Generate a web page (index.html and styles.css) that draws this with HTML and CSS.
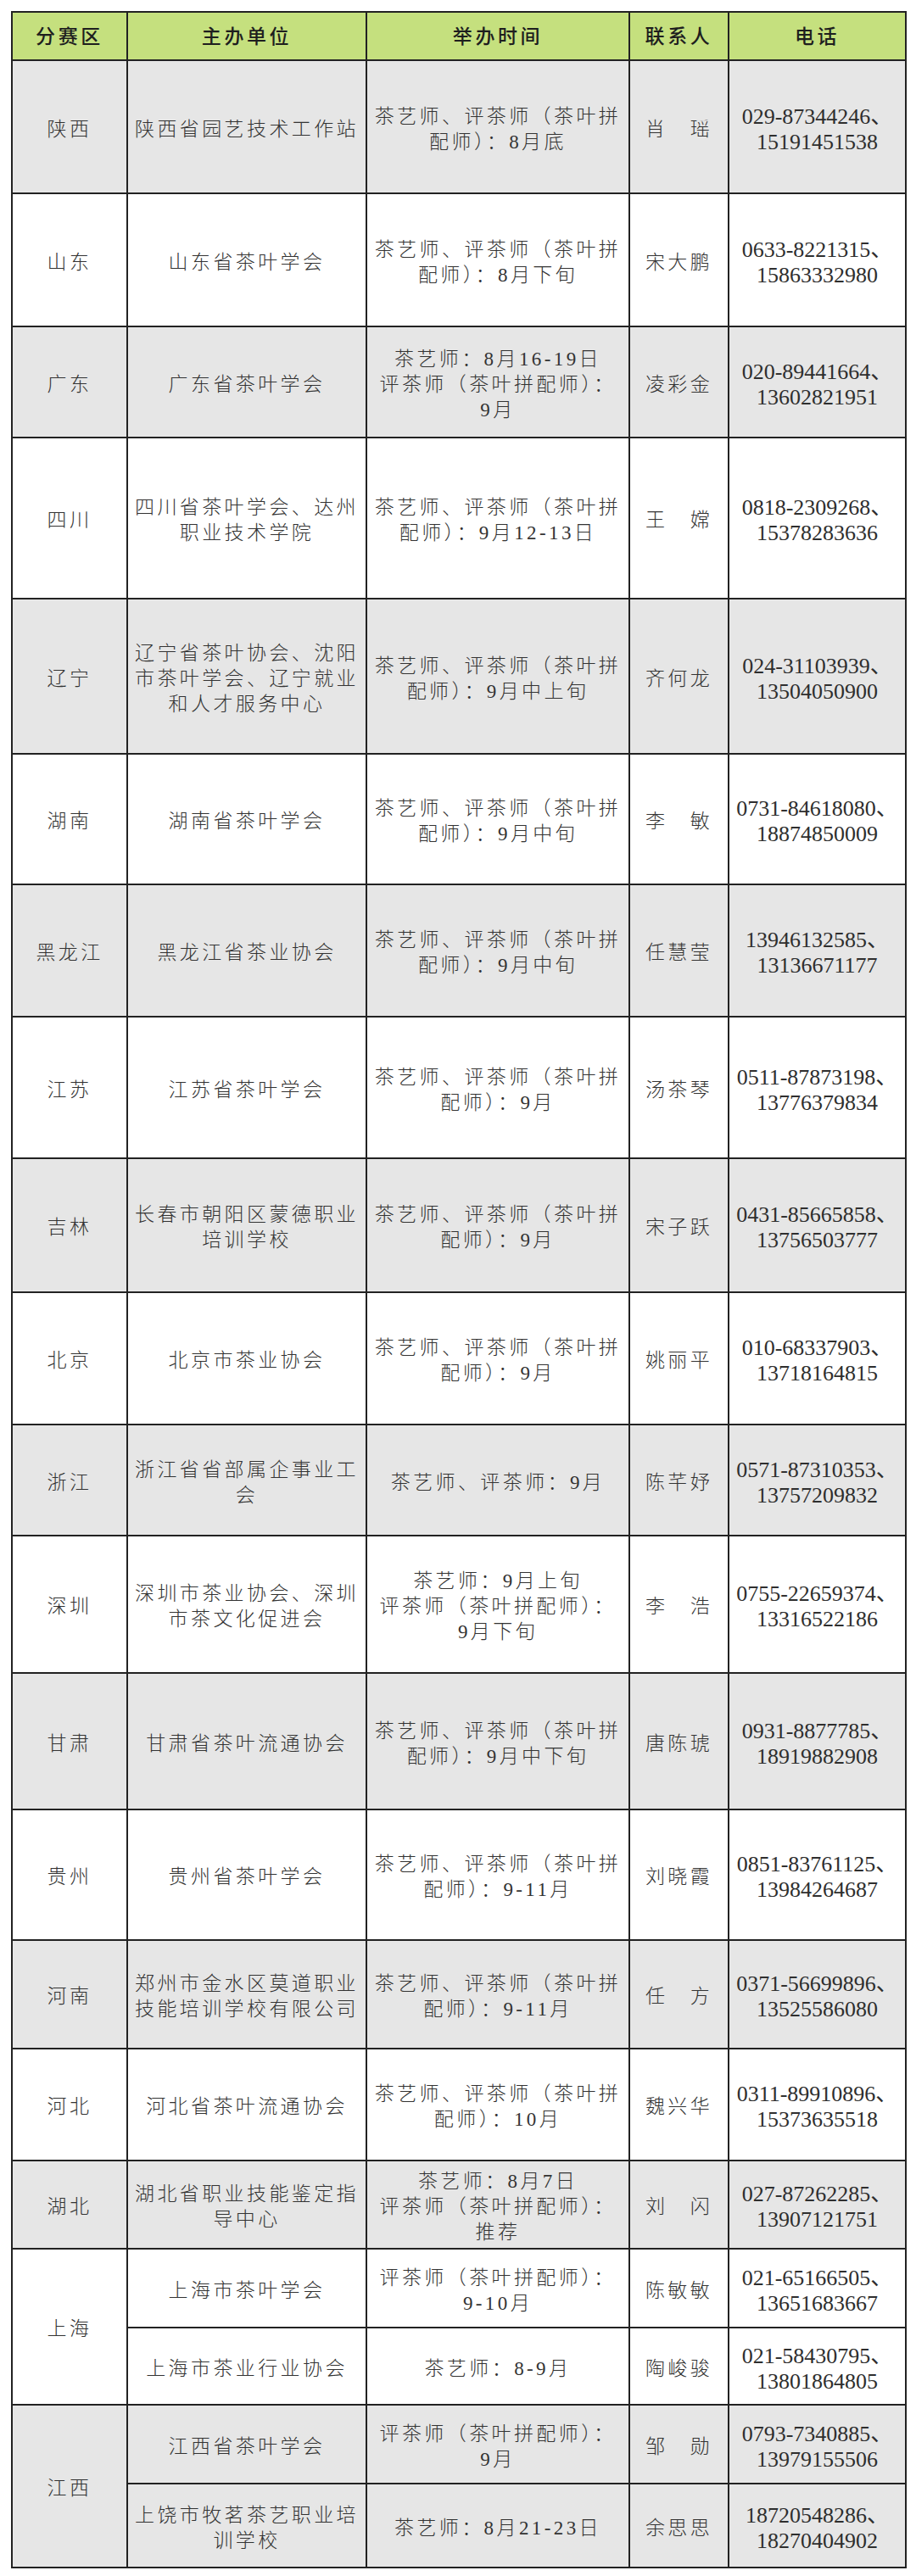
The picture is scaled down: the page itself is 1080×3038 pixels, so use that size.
FILE: index.html
```html
<!DOCTYPE html>
<html lang="zh-CN">
<head>
<meta charset="utf-8">
<title>分赛区</title>
<link rel="stylesheet" href="styles.css">
</head>
<body>
<table class="t">
<colgroup><col class="c1"><col class="c2"><col class="c3"><col class="c4"><col class="c5"></colgroup>
<thead>
<tr class="hd"><th>分赛区</th><th>主办单位</th><th>举办时间</th><th>联系人</th><th>电话</th></tr>
</thead>
<tbody>
<tr class="g h157"><td>陕西</td><td>陕西省园艺技术工作站</td><td>茶艺师、评茶师（茶叶拼<br>配师）：8月底</td><td>肖　瑶</td><td class="ph">029-87344246、<br>15191451538</td></tr>
<tr class="w h157"><td>山东</td><td>山东省茶叶学会</td><td>茶艺师、评茶师（茶叶拼<br>配师）：8月下旬</td><td>宋大鹏</td><td class="ph">0633-8221315、<br>15863332980</td></tr>
<tr class="g h131"><td>广东</td><td>广东省茶叶学会</td><td>茶艺师：8月16-19日<br>评茶师（茶叶拼配师）：<br>9月</td><td>凌彩金</td><td class="ph">020-89441664、<br>13602821951</td></tr>
<tr class="w h190"><td>四川</td><td>四川省茶叶学会、达州<br>职业技术学院</td><td>茶艺师、评茶师（茶叶拼<br>配师）：9月12-13日</td><td>王　嫦</td><td class="ph">0818-2309268、<br>15378283636</td></tr>
<tr class="g h183"><td>辽宁</td><td>辽宁省茶叶协会、沈阳<br>市茶叶学会、辽宁就业<br>和人才服务中心</td><td>茶艺师、评茶师（茶叶拼<br>配师）：9月中上旬</td><td>齐何龙</td><td class="ph">024-31103939、<br>13504050900</td></tr>
<tr class="w h154"><td>湖南</td><td>湖南省茶叶学会</td><td>茶艺师、评茶师（茶叶拼<br>配师）：9月中旬</td><td>李　敏</td><td class="ph">0731-84618080、<br>18874850009</td></tr>
<tr class="g h156"><td>黑龙江</td><td>黑龙江省茶业协会</td><td>茶艺师、评茶师（茶叶拼<br>配师）：9月中旬</td><td>任慧莹</td><td class="ph">13946132585、<br>13136671177</td></tr>
<tr class="w h167"><td>江苏</td><td>江苏省茶叶学会</td><td>茶艺师、评茶师（茶叶拼<br>配师）：9月</td><td>汤茶琴</td><td class="ph">0511-87873198、<br>13776379834</td></tr>
<tr class="g h158"><td>吉林</td><td>长春市朝阳区蒙德职业<br>培训学校</td><td>茶艺师、评茶师（茶叶拼<br>配师）：9月</td><td>宋子跃</td><td class="ph">0431-85665858、<br>13756503777</td></tr>
<tr class="w h156"><td>北京</td><td>北京市茶业协会</td><td>茶艺师、评茶师（茶叶拼<br>配师）：9月</td><td>姚丽平</td><td class="ph">010-68337903、<br>13718164815</td></tr>
<tr class="g h131"><td>浙江</td><td>浙江省省部属企事业工<br>会</td><td>茶艺师、评茶师：9月</td><td>陈芊妤</td><td class="ph">0571-87310353、<br>13757209832</td></tr>
<tr class="w h162"><td>深圳</td><td>深圳市茶业协会、深圳<br>市茶文化促进会</td><td>茶艺师：9月上旬<br>评茶师（茶叶拼配师）：<br>9月下旬</td><td>李　浩</td><td class="ph">0755-22659374、<br>13316522186</td></tr>
<tr class="g h161"><td>甘肃</td><td>甘肃省茶叶流通协会</td><td>茶艺师、评茶师（茶叶拼<br>配师）：9月中下旬</td><td>唐陈琥</td><td class="ph">0931-8877785、<br>18919882908</td></tr>
<tr class="w h154"><td>贵州</td><td>贵州省茶叶学会</td><td>茶艺师、评茶师（茶叶拼<br>配师）：9-11月</td><td>刘晓霞</td><td class="ph">0851-83761125、<br>13984264687</td></tr>
<tr class="g h128"><td>河南</td><td>郑州市金水区莫道职业<br>技能培训学校有限公司</td><td>茶艺师、评茶师（茶叶拼<br>配师）：9-11月</td><td>任　方</td><td class="ph">0371-56699896、<br>13525586080</td></tr>
<tr class="w h132"><td>河北</td><td>河北省茶叶流通协会</td><td>茶艺师、评茶师（茶叶拼<br>配师）：10月</td><td>魏兴华</td><td class="ph">0311-89910896、<br>15373635518</td></tr>
<tr class="g h104"><td>湖北</td><td>湖北省职业技能鉴定指<br>导中心</td><td>茶艺师：8月7日<br>评茶师（茶叶拼配师）：<br>推荐</td><td>刘　闪</td><td class="ph">027-87262285、<br>13907121751</td></tr>
<tr class="w h93"><td rowspan="2">上海</td><td>上海市茶叶学会</td><td>评茶师（茶叶拼配师）：<br>9-10月</td><td>陈敏敏</td><td class="ph">021-65166505、<br>13651683667</td></tr>
<tr class="w h91"><td>上海市茶业行业协会</td><td>茶艺师：8-9月</td><td>陶峻骏</td><td class="ph">021-58430795、<br>13801864805</td></tr>
<tr class="g h93"><td rowspan="2">江西</td><td>江西省茶叶学会</td><td>评茶师（茶叶拼配师）：<br>9月</td><td>邹　勋</td><td class="ph">0793-7340885、<br>13979155506</td></tr>
<tr class="g h99"><td>上饶市牧茗茶艺职业培<br>训学校</td><td>茶艺师：8月21-23日</td><td>余思思</td><td class="ph">18720548286、<br>18270404902</td></tr>
</tbody>
</table>
</body>
</html>
```

FILE: styles.css
```css
html, body {
  margin: 0;
  padding: 0;
  background: #ffffff;
}

body {
  padding: 13px 13px 0 13px;
  font-family: "Liberation Serif", "Noto Sans CJK SC", serif;
}

.t {
  border-collapse: collapse;
  table-layout: fixed;
  width: 1054px;
  border: 2px solid #222;
}

.c1 { width: 136px; }
.c2 { width: 282px; }
.c3 { width: 310px; }
.c4 { width: 117px; }
.c5 { width: 209px; }

.t th,
.t td {
  border: 2px solid #222;
  text-align: center;
  vertical-align: middle;
  padding: 0 4px;
}

.t th {
  background: #c5e07e;
  height: 53px;
  font-size: 23px;
  letter-spacing: 3.6px;
  font-weight: 500;
  color: #1e1e1e;
  line-height: 30px;
  padding-top: 2px;
}

.t td {
  font-size: 23px;
  letter-spacing: 3.4px;
  line-height: 30px;
  color: #333;
  font-weight: 300;
  padding-top: 6px;
}

.t td.ph {
  font-size: 26px;
  letter-spacing: 0;
  line-height: 30px;
  font-weight: 400;
  color: #2e2e2e;
}

.g { background: #e6e6e6; }
.w { background: #ffffff; }

.h91 { height: 91px; }
.h93 { height: 93px; }
.h99 { height: 99px; }
.h104 { height: 104px; }
.h128 { height: 128px; }
.h131 { height: 131px; }
.h132 { height: 132px; }
.h154 { height: 154px; }
.h156 { height: 156px; }
.h157 { height: 157px; }
.h158 { height: 158px; }
.h161 { height: 161px; }
.h162 { height: 162px; }
.h167 { height: 167px; }
.h183 { height: 183px; }
.h190 { height: 190px; }
```
